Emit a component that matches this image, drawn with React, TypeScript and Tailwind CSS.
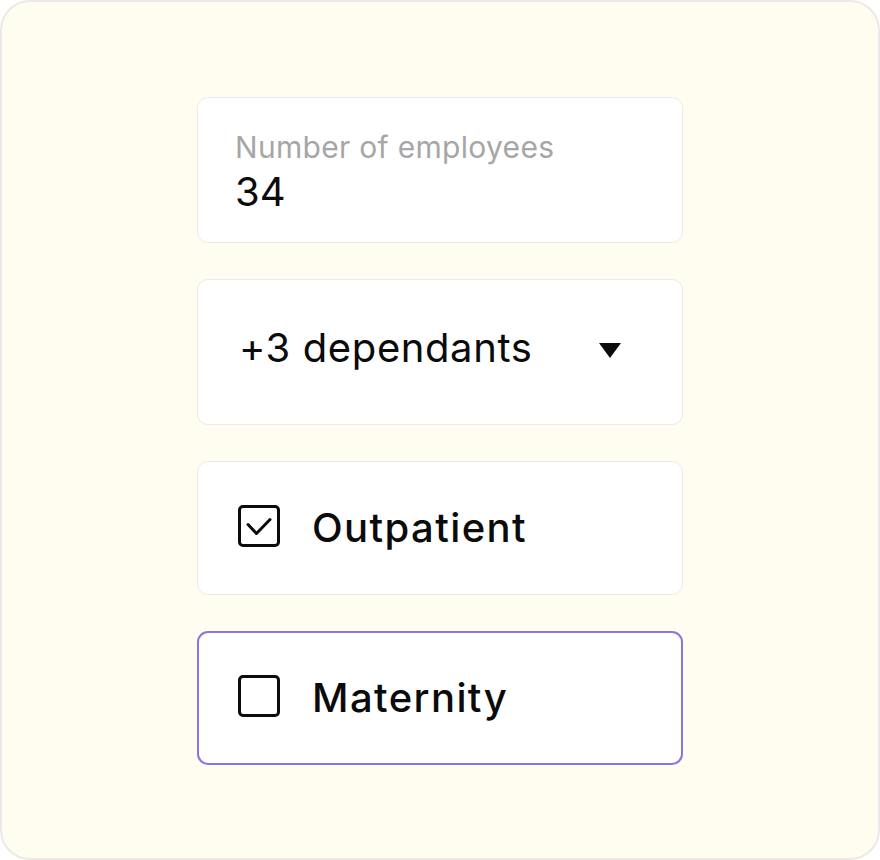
import React, { useState } from "react";

const font = { fontFamily: "Inter, 'Noto Sans', sans-serif" };

const CheckRow: React.FC<{ label: string; checked: boolean; active?: boolean; onToggle: () => void }> = ({
  label,
  checked,
  active,
  onToggle,
}) => (
  <button
    onClick={onToggle}
    className={`flex h-[134px] w-[486px] items-center gap-8 rounded-[11px] bg-white text-left ${
      active ? "border-2 border-[#8a76e2] pl-[39px]" : "border border-[#ebebeb] pl-10"
    }`}
  >
    <span className="-mt-1 flex h-[42px] w-[42px] shrink-0 items-center justify-center rounded-[5px] border-[3px] border-[#0b0b0b]">
      {checked && (
        <svg width="36" height="36" viewBox="0 0 36 36" className="shrink-0">
          <path d="M7 16.5 L15.5 25.5 L29 11.5" fill="none" stroke="#0b0b0b" strokeWidth="3" strokeLinecap="round" strokeLinejoin="round" />
        </svg>
      )}
    </span>
    <span className="text-[40px] font-medium leading-none tracking-[0.035em] text-[#0b0b0b]">{label}</span>
  </button>
);

export default function App() {
  const [outpatient, setOutpatient] = useState(true);
  const [maternity, setMaternity] = useState(false);

  return (
    <div className="h-[860px] w-[880px] bg-white" style={font}>
      <div className="flex h-full w-full flex-col items-center gap-9 rounded-[30px] border-2 border-[#ece9e6] bg-[#fffcf0] pt-[95px]">
        <div className="flex h-[146px] w-[486px] flex-col gap-[10px] rounded-[11px] border border-[#ebebeb] bg-white pl-[37px] pr-10 pt-[34px]">
          <span className="text-[30px] leading-[30px] tracking-[0.01em] text-[#a6a6a6]">Number of employees</span>
          <span className="text-[40px] leading-none text-[#0b0b0b]">34</span>
        </div>

        <div className="flex h-[146px] w-[486px] items-center justify-between rounded-[11px] border border-[#ebebeb] bg-white pb-2 pl-[41px] pr-[61px]">
          <span className="text-[40px] leading-none tracking-[0.015em] text-[#0b0b0b]">+3 dependants</span>
          <svg width="22" height="15" viewBox="0 0 22 15" className="mt-1">
            <path d="M0 0 H22 L11 15 Z" fill="#0b0b0b" />
          </svg>
        </div>

        <CheckRow label="Outpatient" checked={outpatient} onToggle={() => setOutpatient(!outpatient)} />
        <CheckRow label="Maternity" checked={maternity} active onToggle={() => setMaternity(!maternity)} />
      </div>
    </div>
  );
}
